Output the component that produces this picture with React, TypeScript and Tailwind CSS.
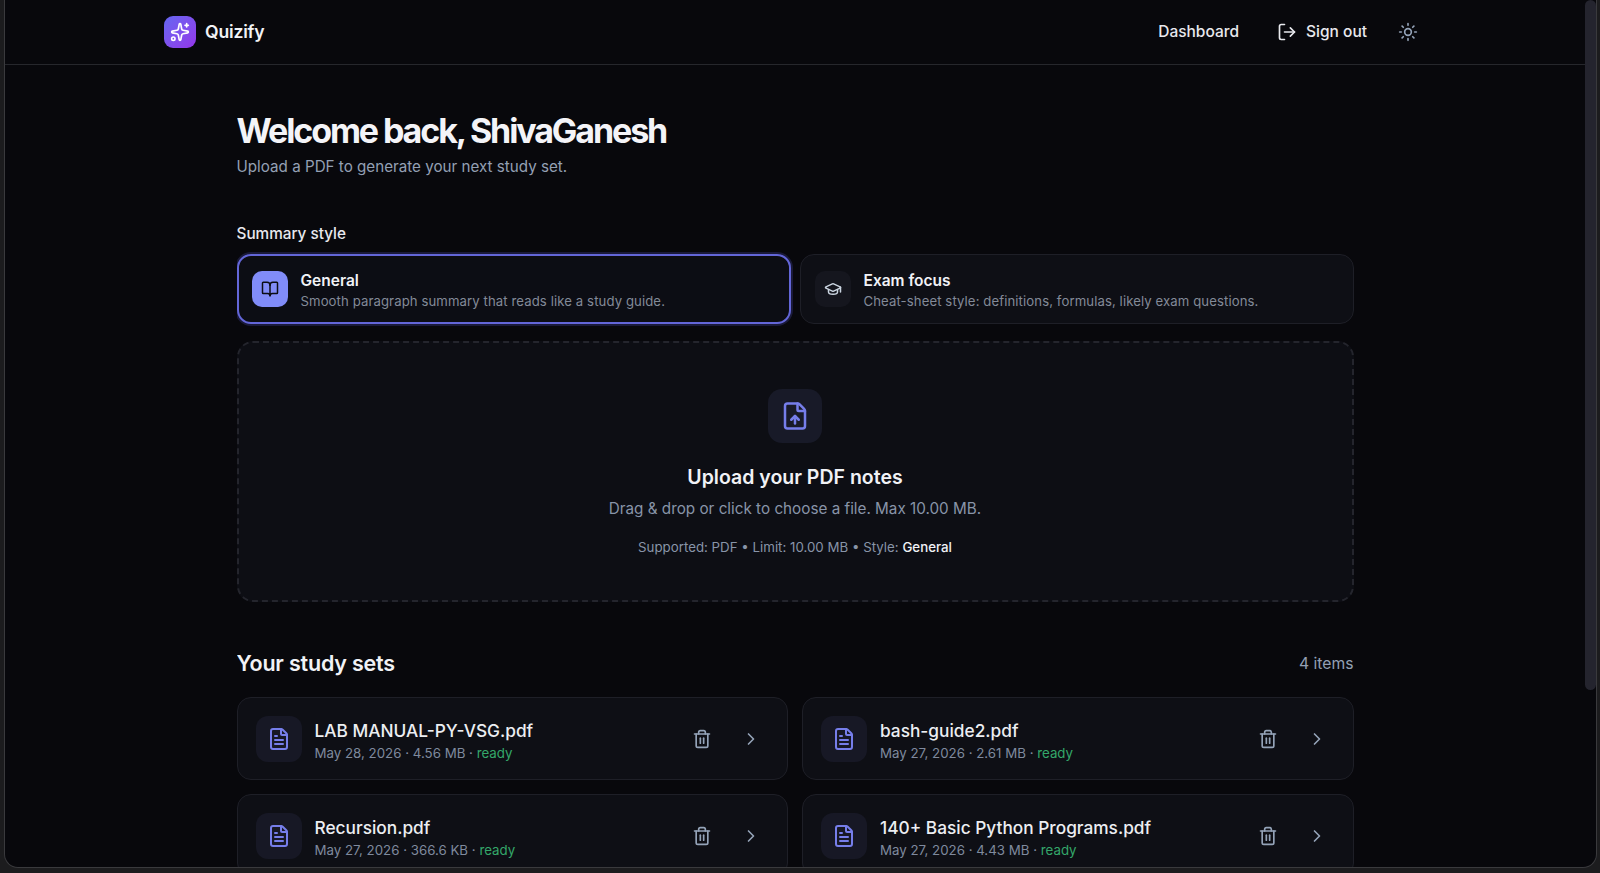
import React from 'react';
import { BookOpen, ChevronRight, FileText, FileUp, GraduationCap, LogOut, Sparkles, Sun, Trash2 } from 'lucide-react';

type StudySet = {
  name: string;
  date: string;
  size: string;
};

const studySets: StudySet[] = [
  { name: 'LAB MANUAL-PY-VSG.pdf', date: 'May 28, 2026', size: '4.56 MB' },
  { name: 'bash-guide2.pdf', date: 'May 27, 2026', size: '2.61 MB' },
  { name: 'Recursion.pdf', date: 'May 27, 2026', size: '366.6 KB' },
  { name: '140+ Basic Python Programs.pdf', date: 'May 27, 2026', size: '4.43 MB' },
];

const Header: React.FC = () => (
  <header className="h-[65px] shrink-0 border-b border-[#26272c]">
    <div className="mx-auto flex h-16 w-[1262px] items-center justify-between">
      <div className="flex items-center gap-[9px]">
        <div className="flex h-8 w-8 items-center justify-center rounded-[9px] bg-gradient-to-br from-[#6366f1] to-[#9333ea]">
          <Sparkles className="h-5 w-5 text-white" />
        </div>
        <span className="text-[17.6px] font-semibold tracking-[-0.2px] text-[#f1f2f6]">Quizify</span>
      </div>
      <nav className="flex items-center text-[15.5px] font-medium text-[#e8e9ee]">
        <span>Dashboard</span>
        <span className="ml-[38px] flex items-center gap-[9px]">
          <LogOut className="h-5 w-5" />
          Sign out
        </span>
        <span className="ml-[23px] flex h-9 w-9 items-center justify-center text-[#94a3b8]">
          <Sun className="h-5 w-5" />
        </span>
      </nav>
    </div>
  </header>
);

const StyleCard: React.FC<{
  title: string;
  description: string;
  selected?: boolean;
  icon: React.ReactNode;
}> = ({ title, description, selected, icon }) => (
  <div
    className={
      selected
        ? 'flex h-[70px] items-center gap-[13px] rounded-[14px] border-2 border-[#6366d8] bg-[#0c0d14] px-[13px] shadow-[0_0_0_2px_rgba(99,102,241,0.2)]'
        : 'flex h-[70px] items-center gap-[13px] rounded-[14px] border border-[#1e1f27] bg-[#0e0f15] px-[14px]'
    }
  >
    <div
      className={
        selected
          ? 'flex h-9 w-9 items-center justify-center rounded-[10px] bg-[#818cf8] text-[#0c0d14]'
          : 'flex h-9 w-9 items-center justify-center rounded-[10px] bg-[#15161e] text-[#cbd5e1]'
      }
    >
      {icon}
    </div>
    <div className="pt-[2px]">
      <div className="text-[15.5px] font-semibold leading-[21px] text-[#f1f2f6]">{title}</div>
      <div className="mt-[1px] text-[13.15px] leading-[19px] tracking-[0.1px] text-[#838a98]">{description}</div>
    </div>
  </div>
);

const DropZone: React.FC = () => (
  <div className="mt-[17px] flex h-[261px] flex-col items-center rounded-[16px] border-2 border-dashed border-[#24252d] bg-[#0d0e14] pt-[46px]">
    <div className="flex h-[54px] w-[54px] items-center justify-center rounded-[14px] bg-[#181a28] text-[#767eea]">
      <FileUp className="h-[30px] w-[30px]" />
    </div>
    <h3 className="mt-[20px] text-[19.5px] font-semibold leading-[28px] text-[#f1f2f6]">Upload your PDF notes</h3>
    <p className="mt-[4px] text-[15.25px] leading-[28px] text-[#8894a8]">Drag &amp; drop or click to choose a file. Max 10.00 MB.</p>
    <p className="mt-[14px] text-[13.3px] leading-[20px] text-[#8894a8]">
      Supported: PDF • Limit: 10.00 MB • Style: <span className="font-medium text-[#f1f2f6]">General</span>
    </p>
  </div>
);

const StudySetCard: React.FC<{ item: StudySet }> = ({ item }) => (
  <div className="flex h-[83px] shrink-0 items-center rounded-[14px] border border-[#1e1f27] bg-[#0e0f15] pl-[18px] pr-[26px]">
    <div className="flex h-[46px] w-[46px] items-center justify-center rounded-[12px] bg-[#171825] text-[#767eea]">
      <FileText className="h-6 w-6" />
    </div>
    <div className="ml-[13px] flex-1 pt-[4px]">
      <div className="text-[17.3px] font-medium leading-[26px] text-[#eceef2]">{item.name}</div>
      <div className="text-[13.3px] leading-[19px] text-[#7f8a9e]">
        {item.date} · {item.size} · <span className="text-[#34a76a]">ready</span>
      </div>
    </div>
    <Trash2 className="h-5 w-5 text-[#94a3b8]" />
    <ChevronRight className="ml-[29px] h-5 w-5 text-[#94a3b8]" />
  </div>
);

export default function App() {
  return (
    <div className="h-screen overflow-hidden bg-[#1c1c1e] pb-[5px] pl-1 pr-[3px] font-['Inter',sans-serif]">
      <div className="relative flex h-full flex-col overflow-hidden rounded-b-[14px] border-x border-b border-[#3a3a3d] bg-[#08080c] pr-[11px]">
        <Header />
        <main className="mx-auto w-[1117px] flex-1 overflow-hidden pt-[42px]">
          <h1 className="text-[34px] font-bold leading-[48px] tracking-[-2.1px] text-[#f4f4f8]">Welcome back, ShivaGanesh</h1>
          <p className="mt-[0px] text-[15.2px] leading-[24px] text-[#94a0b4]">Upload a PDF to generate your next study set.</p>

          <div className="mt-[43px] text-[15.3px] font-medium leading-[24px] text-[#e8e9ee]">Summary style</div>
          <div className="mt-[8px] grid grid-cols-2 gap-[9px]">
            <StyleCard
              selected
              title="General"
              description="Smooth paragraph summary that reads like a study guide."
              icon={<BookOpen className="h-[18px] w-[18px]" />}
            />
            <StyleCard
              title="Exam focus"
              description="Cheat-sheet style: definitions, formulas, likely exam questions."
              icon={<GraduationCap className="h-[18px] w-[18px]" />}
            />
          </div>

          <DropZone />

          <div className="mt-[45px] flex items-center justify-between">
            <h2 className="text-[21.5px] font-semibold leading-[32px] tracking-[-0.2px] text-[#f1f2f6]">Your study sets</h2>
            <span className="pt-[2px] text-[15.7px] text-[#94a0b4]">4 items</span>
          </div>
          <div className="mt-[18px] grid grid-cols-2 gap-[14px]">
            {studySets.map((item) => (
              <StudySetCard key={item.name} item={item} />
            ))}
          </div>
        </main>
        <div className="absolute right-0 top-0 h-[690px] w-[11px] rounded-full bg-[#24242e]" />
      </div>
    </div>
  );
}
